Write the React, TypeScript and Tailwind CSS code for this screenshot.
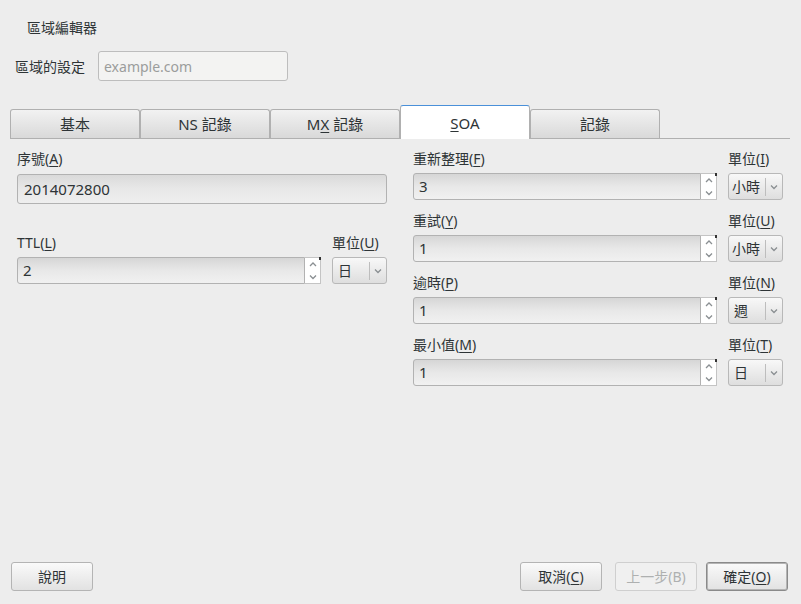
import React from "react";

const font = { fontFamily: '"Noto Sans", "Noto Sans CJK TC", sans-serif' };

function Mn({ pre, k, post = ")" }: { pre: string; k: string; post?: string }) {
  return (
    <span>
      {pre}
      <span className="underline underline-offset-2">{k}</span>
      {post}
    </span>
  );
}

function Chevron({ up }: { up?: boolean }) {
  return (
    <svg width="8" height="6" viewBox="0 0 8 6" className="text-[#8a8f92]">
      <path
        d={up ? "M1 5 L4 2 L7 5" : "M1 1.5 L4 4.5 L7 1.5"}
        fill="none"
        stroke="currentColor"
        strokeWidth="1.3"
      />
    </svg>
  );
}

function SpinEntry({ value }: { value: string }) {
  return (
    <div className="flex h-[27px] flex-1">
      <div className="flex flex-1 items-center rounded-l-[3px] border border-[#b2b2b2] bg-gradient-to-b from-[#d6d6d6] via-[#e8e8e8] to-[#f1f1f1] pl-[5px] text-[15px] text-[#2e3436]">
        {value}
      </div>
      <div className="relative flex w-[16px] flex-col items-center justify-between border border-l-0 border-[#c4c4c4] bg-white py-[3px]">
        <Chevron up />
        <Chevron />
        <span className="absolute -right-[1px] -top-[1px] h-[3px] w-[2px] bg-[#333]" />
      </div>
    </div>
  );
}

function Combo({ value, wide }: { value: string; wide?: boolean }) {
  return (
    <div className="ml-[11px] flex h-[27px] w-[55px] items-center rounded-[3px] border border-[#b8b8b8] bg-gradient-to-b from-[#f8f8f8] to-[#dedede] text-[14px] text-[#2e3436]">
      <span className={wide ? "flex-1 pl-[3px]" : "flex-1 pl-[5px]"}>{value}</span>
      <span className="h-[18px] w-px bg-[#bdbdbd]" />
      <span className="flex w-[16px] justify-center">
        <Chevron />
      </span>
    </div>
  );
}

function Row({
  label,
  unit,
  value,
  combo,
}: {
  label: React.ReactNode;
  unit: React.ReactNode;
  value: string;
  combo: string;
}) {
  return (
    <div className="flex flex-col">
      <div className="flex h-[20px] items-center justify-between text-[14px] text-[#2e3436]">
        <span>{label}</span>
        <span className="w-[55px]">{unit}</span>
      </div>
      <div className="mt-[5px] flex">
        <SpinEntry value={value} />
        <Combo value={combo} wide={combo.length > 1} />
      </div>
    </div>
  );
}

function Tab({ children, active }: { children: React.ReactNode; active?: boolean }) {
  if (active)
    return (
      <div className="relative -mb-px flex h-[34px] w-[130px] items-center justify-center rounded-t-[3px] border border-b-0 border-[#b0b0b0] border-t-[#4a90d9] bg-white pt-[2px] text-[15px] text-[#2e3436]">
        <span>{children}</span>
      </div>
    );
  return (
    <div className="flex h-[29px] w-[130px] items-center justify-center rounded-t-[3px] border border-b-0 border-[#b0b0b0] bg-gradient-to-b from-[#f2f2f2] to-[#d9d9d9] text-[15px] text-[#2e3436]">
      <span>{children}</span>
    </div>
  );
}

function Button({
  children,
  disabled,
  def,
}: {
  children: React.ReactNode;
  disabled?: boolean;
  def?: boolean;
}) {
  return (
    <div
      className={
        "flex h-[29px] w-[82px] items-center justify-center rounded-[3px] border text-[14px] " +
        (disabled
          ? "border-[#cfcfcf] bg-[#f0f0f0] text-[#aeb0b0]"
          : def
          ? "border-[#8a8a8a] bg-gradient-to-b from-[#fafafa] to-[#e2e2e2] text-[#2e3436] ring-1 ring-inset ring-[#b4b4b4]"
          : "border-[#b4b4b4] bg-gradient-to-b from-[#fafafa] to-[#e2e2e2] text-[#2e3436]")
      }
    >
      {children}
    </div>
  );
}

export default function App() {
  return (
    <div style={font} className="flex h-[604px] w-[801px] flex-col bg-[#ededed] text-[#2e3436]">
      <div className="pl-[27px] pt-[18px] text-[14px] leading-[20px]">區域編輯器</div>

      <div className="mt-[13px] flex items-center pl-[15px]">
        <span className="w-[83px] text-[14px]">區域的設定</span>
        <div className="flex h-[30px] w-[190px] items-center rounded-[3px] border border-[#bdbdbd] bg-[#f3f3f2] pl-[5px] text-[14px] text-[#9b9d9c]">
          example.com
        </div>
      </div>

      <div className="ml-[10px] mr-[11px] mt-[24px] flex h-[34px] items-end border-b border-[#b0b0b0]">
        <Tab>基本</Tab>
        <Tab>NS 記錄</Tab>
        <Tab>
          M<span className="underline underline-offset-2">X</span>
          {" 記錄"}
        </Tab>
        <Tab active>
          <span className="underline underline-offset-2">S</span>OA
        </Tab>
        <Tab>記錄</Tab>
      </div>

      <div className="mt-[9px] flex">
        <div className="ml-[17px] flex w-[370px] flex-col">
          <div className="flex h-[20px] items-center text-[14px]">
            <Mn pre="序號(" k="A" />
          </div>
          <div className="mt-[6px] flex h-[30px] items-center rounded-[3px] border border-[#b2b2b2] bg-gradient-to-b from-[#dadada] via-[#e8e8e8] to-[#efefef] pl-[6px] text-[15px]">
            2014072800
          </div>
          <div className="mt-[28px]">
            <Row label={<Mn pre="TTL(" k="L" />} unit={<Mn pre="單位(" k="U" />} value="2" combo="日" />
          </div>
        </div>

        <div className="ml-[26px] flex w-[370px] flex-col gap-[10px]">
          <Row label={<Mn pre="重新整理(" k="F" />} unit={<Mn pre="單位(" k="I" />} value="3" combo="小時" />
          <Row label={<Mn pre="重試(" k="Y" />} unit={<Mn pre="單位(" k="U" />} value="1" combo="小時" />
          <Row label={<Mn pre="逾時(" k="P" />} unit={<Mn pre="單位(" k="N" />} value="1" combo="週" />
          <Row label={<Mn pre="最小值(" k="M" />} unit={<Mn pre="單位(" k="T" />} value="1" combo="日" />
        </div>
      </div>

      <div className="mb-[13px] mt-auto flex items-center px-[11px]">
        <Button>說明</Button>
        <div className="flex-1" />
        <Button>
          <Mn pre="取消(" k="C" />
        </Button>
        <div className="ml-[13px]">
          <Button disabled>上一步(B)</Button>
        </div>
        <div className="ml-[9px]">
          <Button def>
            <Mn pre="確定(" k="O" />
          </Button>
        </div>
        <div className="w-[2px]" />
      </div>
    </div>
  );
}
